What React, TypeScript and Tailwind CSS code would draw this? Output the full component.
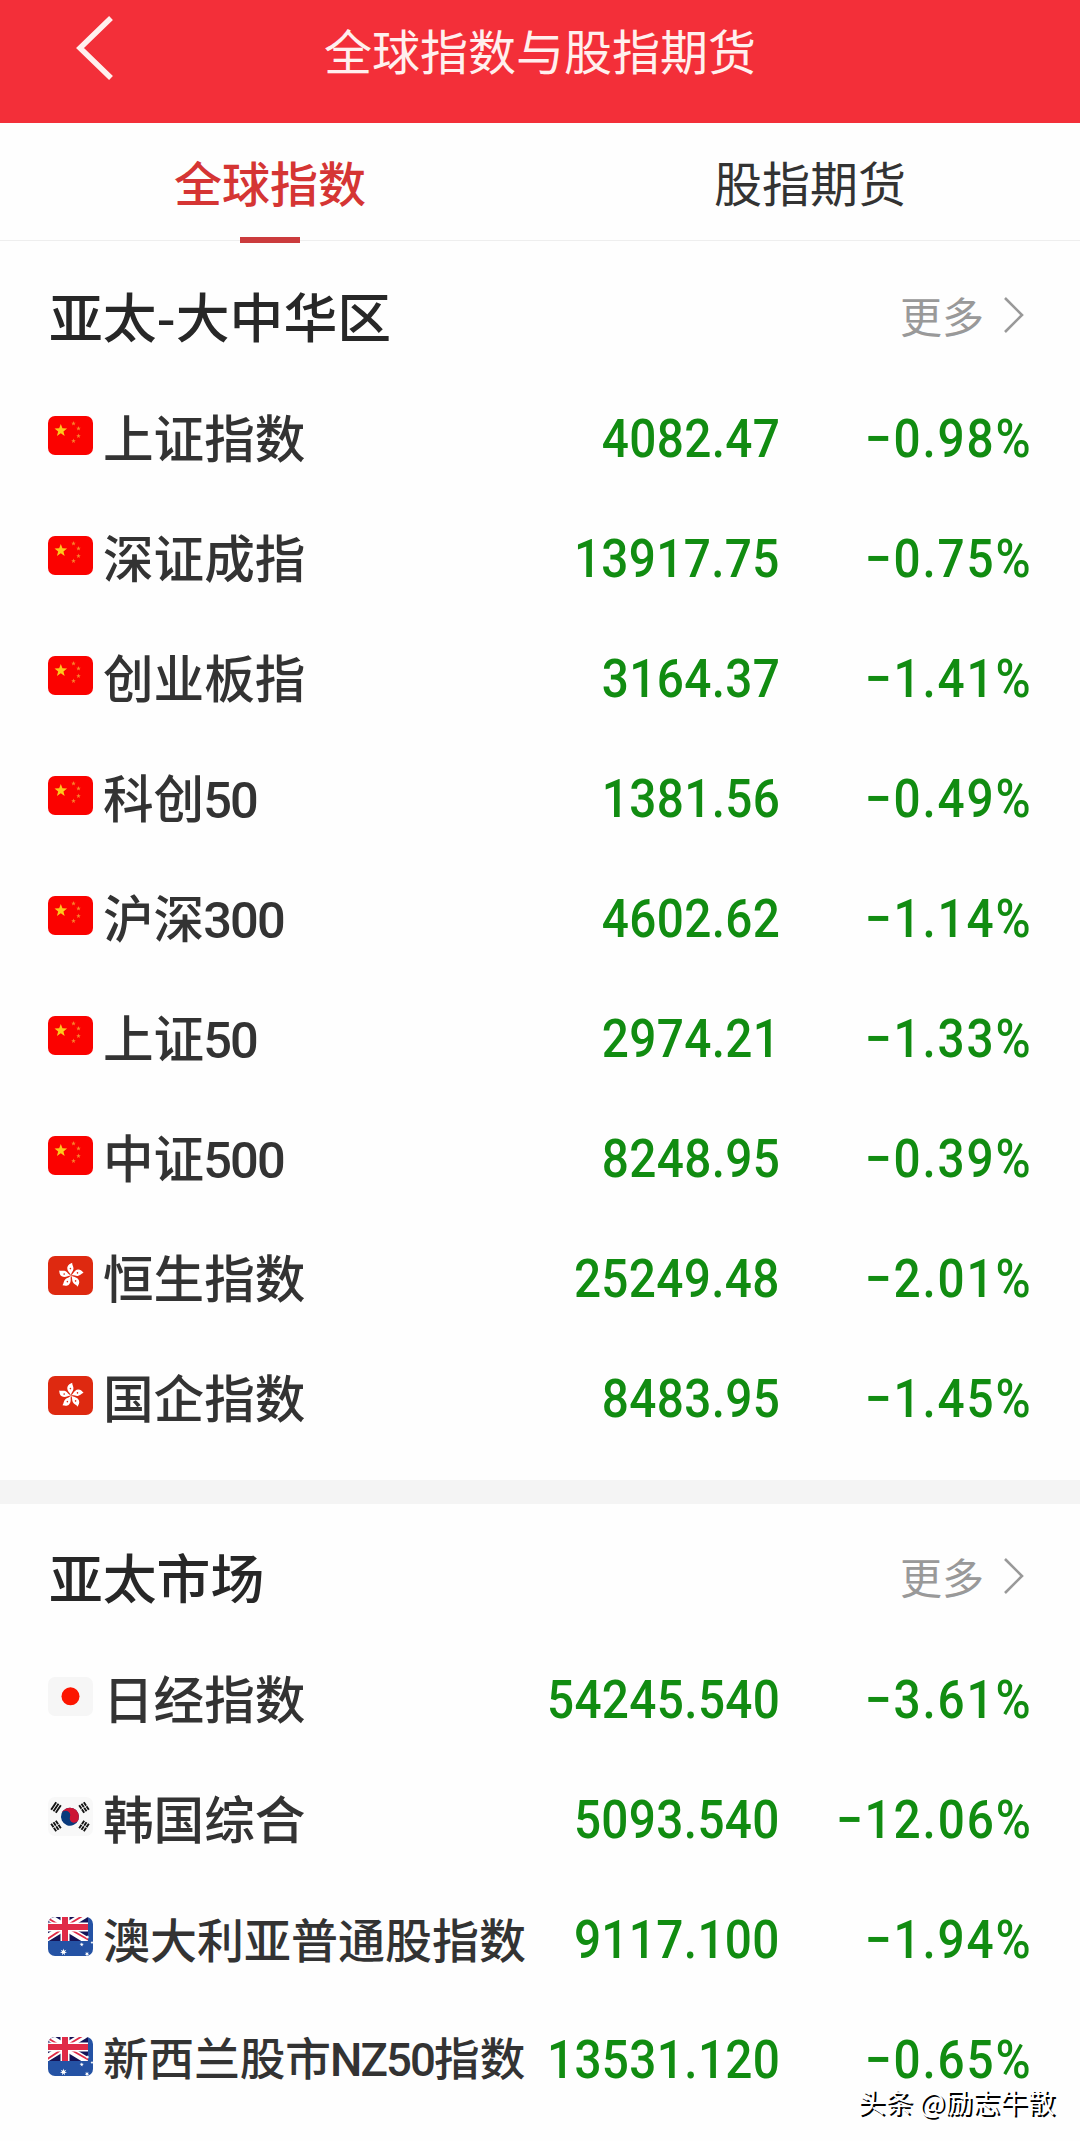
import React from 'react';

type FlagCode = 'cn' | 'hk' | 'jp' | 'kr' | 'au';

interface IndexItem {
  flag: FlagCode;
  name: string;
  value: string;
  change: string;
  size?: 'md' | 'sm' | 'xs';
}

const greaterChina: IndexItem[] = [
  { flag: 'cn', name: '上证指数', value: '4082.47', change: '−0.98%' },
  { flag: 'cn', name: '深证成指', value: '13917.75', change: '−0.75%' },
  { flag: 'cn', name: '创业板指', value: '3164.37', change: '−1.41%' },
  { flag: 'cn', name: '科创50', value: '1381.56', change: '−0.49%' },
  { flag: 'cn', name: '沪深300', value: '4602.62', change: '−1.14%' },
  { flag: 'cn', name: '上证50', value: '2974.21', change: '−1.33%' },
  { flag: 'cn', name: '中证500', value: '8248.95', change: '−0.39%' },
  { flag: 'hk', name: '恒生指数', value: '25249.48', change: '−2.01%' },
  { flag: 'hk', name: '国企指数', value: '8483.95', change: '−1.45%' },
];

const asiaPacific: IndexItem[] = [
  { flag: 'jp', name: '日经指数', value: '54245.540', change: '−3.61%' },
  { flag: 'kr', name: '韩国综合', value: '5093.540', change: '−12.06%' },
  { flag: 'au', name: '澳大利亚普通股指数', value: '9117.100', change: '−1.94%', size: 'sm' },
  { flag: 'au', name: '新西兰股市NZ50指数', value: '13531.120', change: '−0.65%', size: 'xs' },
];

// Long names step down in size so they stay on one line
const nameSizes = {
  md: 'text-[50.6px]',
  sm: 'text-[47px]',
  xs: 'text-[45.6px]',
};

// Star centred on cx, cy
const star = (cx: number, cy: number, r: number, points = 5) => {
  const pts: string[] = [];
  for (let i = 0; i < points * 2; i++) {
    const radius = i % 2 === 0 ? r : r * 0.42;
    const a = (Math.PI * i) / points - Math.PI / 2;
    pts.push(`${(cx + radius * Math.cos(a)).toFixed(2)},${(cy + radius * Math.sin(a)).toFixed(2)}`);
  }
  return pts.join(' ');
};

const ChinaFlag = () => (
  <>
    <rect width="45" height="39" fill="#fb0200" />
    <polygon points={star(12.8, 14.6, 6.6)} fill="#fdc81c" />
    <g fill="#f8842a">
      <polygon points={star(25.5, 7.5, 2.4)} />
      <polygon points={star(30.5, 12.5, 2.4)} />
      <polygon points={star(30.5, 20, 2.4)} />
      <polygon points={star(25.5, 25, 2.4)} />
    </g>
  </>
);

const HongKongFlag = () => (
  <>
    <rect width="45" height="39" fill="#de2910" />
    {[0, 72, 144, 216, 288].map(angle => (
      <g key={angle} transform={`translate(23 19.6) rotate(${angle})`}>
        <path d="M0 0C-1 -3 -4.4 -4.6 -3.6 -8.6C-3 -11 -.6 -12 1.2 -12.8C1 -10.5 2.9 -9 2.4 -6.3C2 -4 0 -3 0 0Z" fill="#fff" />
        <circle cx="-.6" cy="-7" r=".8" fill="#de2910" />
      </g>
    ))}
  </>
);

const JapanFlag = () => (
  <>
    <rect width="45" height="39" fill="#f6f6f6" />
    <circle cx="22.5" cy="19.3" r="9" fill="#fc1500" />
  </>
);

const KoreaFlag = () => (
  <>
    <rect width="45" height="39" fill="#f8f8f8" />
    <g transform="translate(22 19.7) rotate(20)">
      <circle r="9" fill="#0a3a7c" />
      <path d="M-9 0A9 9 0 0 1 9 0A4.5 4.5 0 0 1 0 0A4.5 4.5 0 0 0 -9 0Z" fill="#cc1535" />
    </g>
    {[
      { x: 8, y: 10.5, r: -56, split: false },
      { x: 36, y: 10.5, r: 56, split: true },
      { x: 8, y: 29, r: 56, split: true },
      { x: 36, y: 29, r: -56, split: true },
    ].map(({ x, y, r, split }) => (
      <g key={`${x}-${y}`} transform={`translate(${x} ${y}) rotate(${r})`} stroke="#151515" strokeWidth="1.9">
        <path d="M-4.5 -2.8H4.5M-4.5 0H4.5M-4.5 2.8H4.5" />
        {split && <path d="M0 -4V4" stroke="#f8f8f8" strokeWidth=".8" />}
      </g>
    ))}
  </>
);

const AustraliaFlag = () => (
  <>
    <rect width="45" height="39" fill="#2452a4" />
    <svg x="-6" y="-4" width="46" height="28" viewBox="0 0 46 28">
      <rect width="46" height="28" fill="#151457" />
      <path d="M0 0L46 28M46 0L0 28" stroke="#fff" strokeWidth="7" />
      <path d="M-1 1L22 15M47 -1L24 13M1 29L22 15M47 27L24 14" stroke="#e02b47" strokeWidth="1.8" />
      <path d="M23 0V28M0 14H46" stroke="#fff" strokeWidth="9" />
      <path d="M23 0V28M0 14H46" stroke="#e02b47" strokeWidth="6" />
    </svg>
    <g fill="#fff">
      <polygon points={star(15.5, 35, 3.6, 7)} />
      <polygon points={star(33.7, 27.5, 2.2, 7)} />
      <polygon points={star(39.5, 20, 2, 7)} />
      <polygon points={star(39, 37, 2.4, 7)} />
      <polygon points={star(44, 25.5, 1.6, 7)} />
    </g>
  </>
);

const flags: Record<FlagCode, React.FC> = {
  cn: ChinaFlag,
  hk: HongKongFlag,
  jp: JapanFlag,
  kr: KoreaFlag,
  au: AustraliaFlag,
};

// Latin letters and digits inside a name are set in the narrower number face
const IndexName: React.FC<{ name: string }> = ({ name }) => (
  <>
    {name.split(/([A-Z0-9]+)/).map((part, i) =>
      i % 2 === 1 ? (
        <span key={i} className="-ml-px font-[Roboto] leading-[0] tracking-[-1.9px]">{part}</span>
      ) : (
        part
      )
    )}
  </>
);

const IndexRow: React.FC<{ item: IndexItem }> = ({ item }) => {
  const Flag = flags[item.flag];

  return (
    <li className="flex items-center h-[120px] whitespace-nowrap">
      <svg className="w-[45px] h-[39px] rounded-[7px] shrink-0 mb-[5px]" viewBox="0 0 45 39">
        <Flag />
      </svg>
      <span className={`ml-[10px] mb-1 flex-1 min-w-0 font-medium text-[#333] ${nameSizes[item.size || 'md']}`}>
        <IndexName name={item.name} />
      </span>
      <span className="mt-0.5 origin-right scale-x-90 font-[Roboto] font-medium text-[53px] tracking-[0.4px] text-[#118c11]">
        {item.value}
      </span>
      <span className="w-[252px] mt-0.5 flex shrink-0 justify-end">
        <span className="-mr-px origin-right scale-x-90 font-[Roboto] font-medium text-[53px] tracking-[2.1px] text-[#118c11]">
          {item.change}
        </span>
      </span>
    </li>
  );
};

const IndexSection: React.FC<{ title: string; items: IndexItem[] }> = ({ title, items }) => (
  <section className="px-12">
    <div className="flex items-center justify-between h-[137px] pt-[11px]">
      <h2 className="ml-px text-[53.8px] font-medium text-[#272727]">{title}</h2>
      <button className="flex items-center text-[42px] text-[#999]">
        更多
        <svg className="w-[22px] h-[38px] -mt-px ml-[19px] mr-[7px]" viewBox="0 0 22 38" fill="none" stroke="#999" strokeWidth="2.6">
          <path d="M2 2L19 19L2 36" />
        </svg>
      </button>
    </div>
    <ul>
      {items.map(item => (
        <IndexRow key={item.name} item={item} />
      ))}
    </ul>
  </section>
);

const App: React.FC = () => {
  return (
    <div className="relative w-[1080px] h-[2141px] overflow-hidden bg-[#fefefe] font-['Noto_Sans_CJK_SC',sans-serif] leading-none">
      <header className="flex items-start h-[123px] bg-[#f32f39] text-white">
        <button className="w-[200px] pl-[74px] pt-[13px]">
          <svg className="w-[42px] h-[70px]" viewBox="0 0 42 70" fill="none" stroke="#fff0ee" strokeWidth="5.5">
            <path d="M37 5L6 35L37 65" />
          </svg>
        </button>
        <h1 className="flex-1 pt-[25px] text-center text-[48px] text-[#fff0ee]">全球指数与股指期货</h1>
        <div className="w-[200px]" />
      </header>

      <nav className="grid grid-cols-2 h-[118px] border-b border-[#eee] text-[48px]">
        <button className="relative pb-px font-medium text-[#d53534]">
          全球指数
          <span className="absolute left-[240px] -bottom-[3px] w-[60px] h-[6px] bg-[#cb3b3d]" />
        </button>
        <button className="pb-px text-[#333]">股指期货</button>
      </nav>

      <IndexSection title="亚太-大中华区" items={greaterChina} />
      <div className="h-6 mt-[22px] -mb-0.5 bg-[#f4f4f4]" />
      <IndexSection title="亚太市场" items={asiaPacific} />

      <div className="absolute right-[25px] top-[2088px] text-[27.5px] text-white whitespace-nowrap [text-shadow:2px_2px_0_#000]">
        头条 @励志牛散
      </div>
    </div>
  );
};

export default App;
